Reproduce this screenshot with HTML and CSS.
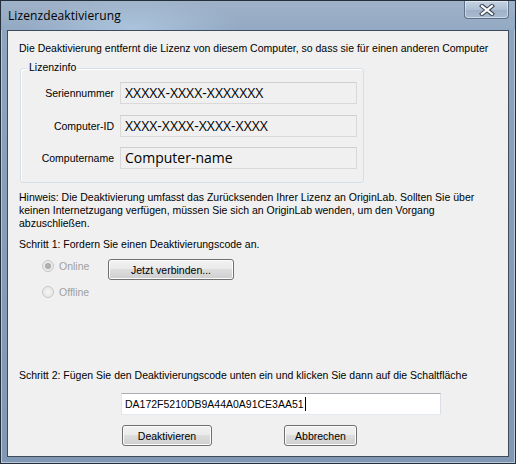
FILE: index.html
```html
<!DOCTYPE html>
<html lang="de">
<head>
<meta charset="utf-8">
<title>Lizenzdeaktivierung</title>
<link rel="stylesheet" href="styles.css">
</head>
<body>
<div class="window">
  <div class="titlebar">
    <span class="title">Lizenzdeaktivierung</span>
    <div class="close">
      <svg width="16" height="12" viewBox="0 0 16 12">
        <path d="M3 2 L13 10 M13 2 L3 10" stroke="#3b4656" stroke-width="4.2" stroke-linecap="square" fill="none"/>
        <path d="M3 2 L13 10 M13 2 L3 10" stroke="#ffffff" stroke-width="2.2" stroke-linecap="square" fill="none"/>
      </svg>
    </div>
  </div>
  <div class="client">
    <p class="text intro">Die Deaktivierung entfernt die Lizenz von diesem Computer, so dass sie für einen anderen Computer</p>
    <div class="group">
      <span class="legend">Lizenzinfo</span>
      <div class="rows">
        <span class="label">Seriennummer</span><div class="field">XXXXX-XXXX-XXXXXXX</div>
        <span class="label">Computer-ID</span><div class="field">XXXX-XXXX-XXXX-XXXX</div>
        <span class="label">Computername</span><div class="field">Computer-name</div>
      </div>
    </div>
    <p class="text hint">Hinweis: Die Deaktivierung umfasst das Zurücksenden Ihrer Lizenz an OriginLab. Sollten Sie über keinen Internetzugang verfügen, müssen Sie sich an OriginLab wenden, um den Vorgang abzuschließen.</p>
    <p class="text step1">Schritt 1: Fordern Sie einen Deaktivierungscode an.</p>
    <div class="options">
      <label class="radio disabled"><span class="dot checked"></span>Online</label>
      <button class="btn connect">Jetzt verbinden...</button>
      <label class="radio disabled"><span class="dot"></span>Offline</label>
    </div>
    <p class="text step2">Schritt 2: Fügen Sie den Deaktivierungscode unten ein und klicken Sie dann auf die Schaltfläche</p>
    <div class="code"><span>DA172F5210DB9A44A0A91CE3AA51</span><span class="caret"></span></div>
    <div class="actions">
      <button class="btn deact">Deaktivieren</button>
      <button class="btn cancel">Abbrechen</button>
    </div>
  </div>
</div>
</body>
</html>
```
FILE: styles.css
```css
html, body {
  margin: 0;
  padding: 0;
  width: 516px;
  height: 464px;
  overflow: hidden;
  background: #000;
}
.window {
  box-sizing: border-box;
  width: 516px;
  height: 464px;
  border: 1px solid #26303c;
  background: linear-gradient(180deg, #93a9c3 0px, #8ea5c0 30px, #869eba 200px, #8198b4 464px);
  display: flex;
  flex-direction: column;
  box-shadow: inset 0 0 0 1px #b8c8da;
}
.titlebar {
  height: 29px;
  display: flex;
  align-items: flex-start;
  justify-content: space-between;
  background: radial-gradient(ellipse 110px 30px at 130px 26px, rgba(180,205,230,0.7), rgba(180,205,230,0) 100%),
              linear-gradient(180deg, #9fb2c8 0%, #93a9c3 100%);
}
.title {
  font-family: "Open Sans", "Noto Sans", sans-serif;
  font-size: 12px;
  color: #000;
  margin: 6px 0 0 7px;
  letter-spacing: 0.1px;
}
.close {
  width: 45px;
  height: 18px;
  margin-right: 6px;
  box-sizing: border-box;
  border: 1px solid #5d7189;
  border-top: none;
  border-radius: 0 0 4px 4px;
  background: linear-gradient(180deg, #c5d3e2 0%, #aebfd3 50%, #9db0c7 51%, #a9bcd2 100%);
  box-shadow: inset 0 0 0 1px rgba(255,255,255,0.45);
  display: flex;
  align-items: center;
  justify-content: center;
}
.client {
  flex: 1;
  margin: 0 6px 6px 6px;
  border: 1px solid #3e4b5b;
  background: #f0f0f0;
  font-family: "Liberation Sans", Arial, sans-serif;
  font-size: 10.5px;
  color: #000;
  padding: 0 0 0 11px;
}
.text {
  margin: 0;
  line-height: 13px;
}
.intro {
  margin-top: 11px;
  white-space: nowrap;
}
.group {
  position: relative;
  width: 344px;
  height: 115px;
  box-sizing: border-box;
  margin: 13px 0 0 1px;
  border: 1px solid #d5dfe5;
  border-radius: 3px;
  box-shadow: inset 1px 1px 0 #fff;
}
.legend {
  position: absolute;
  left: 6px;
  top: -8px;
  padding: 0 2px;
  background: #f0f0f0;
  line-height: 13px;
}
.rows {
  display: grid;
  grid-template-columns: 93px 237px;
  column-gap: 6px;
  row-gap: 10.5px;
  align-items: center;
  margin-top: 13px;
}
.label {
  text-align: right;
}
.field {
  height: 22px;
  box-sizing: border-box;
  border: 1px solid #d9d9d9;
  border-top-color: #cfcfcf;
  background: #f0f0f0;
  font-family: "Open Sans", "Noto Sans", sans-serif;
  font-size: 14px;
  line-height: 20px;
  padding-left: 4px;
  color: #000;
}
.hint {
  margin-top: 8px;
  width: 470px;
}
.step1 {
  margin-top: 8px;
}
.options {
  display: grid;
  grid-template-columns: 66px 126px;
  grid-template-rows: 20px 20px;
  row-gap: 6px;
  margin: 5px 0 0 23px;
  align-items: center;
}
.radio {
  display: flex;
  align-items: center;
  gap: 5px;
}
.radio.disabled {
  color: #a0a0a0;
}
.dot {
  width: 12px;
  height: 12px;
  box-sizing: border-box;
  border-radius: 50%;
  border: 1px solid #c6c6c6;
  background: radial-gradient(circle, #f4f4f4 0%, #e4e4e4 100%);
  display: inline-flex;
  align-items: center;
  justify-content: center;
}
.dot.checked::after {
  content: "";
  width: 6px;
  height: 6px;
  border-radius: 50%;
  background: radial-gradient(circle, #b8b8b8 0%, #9c9c9c 100%);
}
.btn {
  font-family: "Liberation Sans", Arial, sans-serif;
  font-size: 10.5px;
  color: #000;
  height: 21px;
  box-sizing: border-box;
  border: 1px solid #707070;
  border-radius: 3px;
  background: linear-gradient(180deg, #f2f2f2 0%, #ebebeb 45%, #dddddd 50%, #cfcfcf 100%);
  box-shadow: inset 0 0 0 1px #fcfcfc;
  padding: 0;
}
.connect {
  width: 126px;
  grid-row: 1;
  grid-column: 2;
  align-self: start;
  margin-top: 3px;
}
.step2 {
  margin-top: 67px;
}
.code {
  margin: 11px 0 0 102px;
  width: 320px;
  height: 22px;
  box-sizing: border-box;
  border: 1px solid #abadb3;
  border-left-color: #e2e3ea;
  border-right-color: #dbdfe6;
  border-bottom-color: #e3e9ef;
  background: #fff;
  display: flex;
  align-items: center;
  padding-left: 3px;
  line-height: 13px;
}
.caret {
  display: inline-block;
  width: 1px;
  height: 14px;
  background: #000;
  margin-left: 1px;
}
.actions {
  display: flex;
  gap: 72px;
  margin: 10px 0 0 103px;
}
.deact {
  width: 90px;
}
.cancel {
  width: 73px;
}
```
